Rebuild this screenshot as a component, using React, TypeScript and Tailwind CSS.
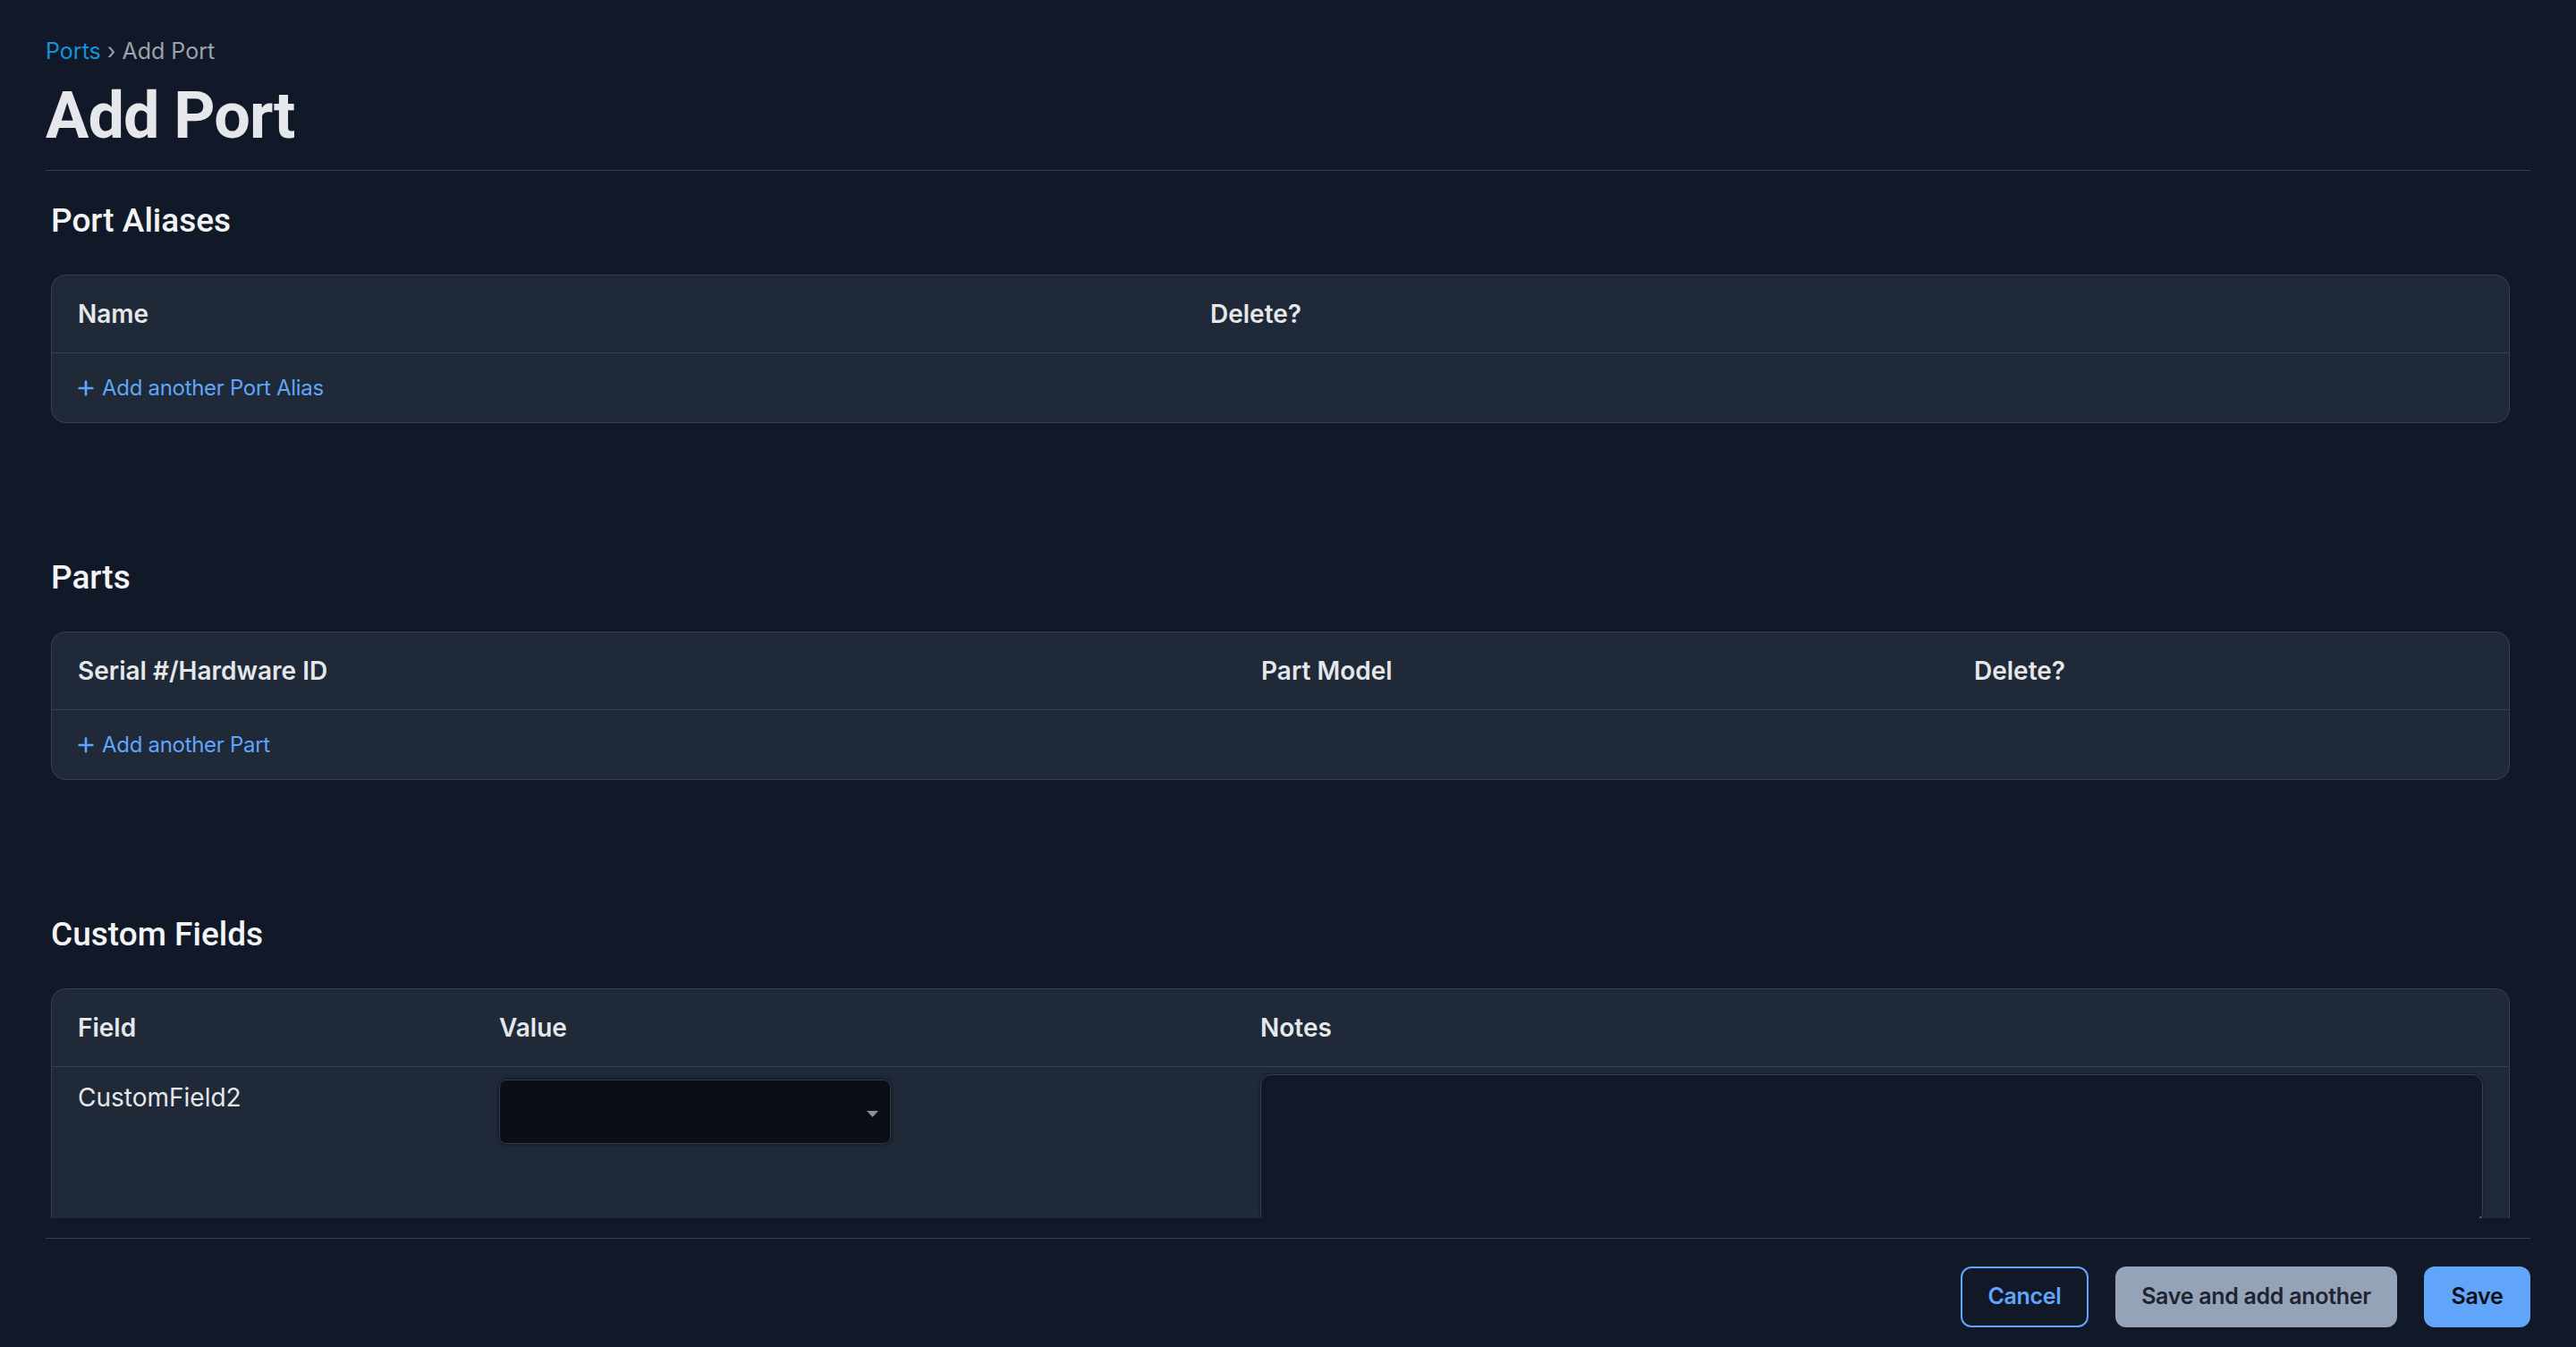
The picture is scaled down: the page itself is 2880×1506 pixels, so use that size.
import React from 'react';

const PlusIcon = () => (
    <svg width="18" height="18" viewBox="0 0 16 16" fill="none" stroke="currentColor" strokeWidth="2.4" strokeLinecap="round">
        <path d="M8 1.5v13M1.5 8h13" />
    </svg>
);

const Section: React.FC<{ title: string; first?: boolean; children: React.ReactNode }> = ({ title, first, children }) => (
    <section className={first ? 'pt-[37px]' : 'pt-[154px]'}>
        <h2 className="font-['Roboto',sans-serif] text-[37px] leading-[37px] font-medium text-[#f3f4f6]">{title}</h2>
        <div className="mt-[42px] rounded-[16px] border border-[#374151] bg-[#1f2937]">{children}</div>
    </section>
);

const AddLink: React.FC<{ label: string }> = ({ label }) => (
    <div className="h-[77px] flex items-center px-[29px]">
        <a className="flex items-center gap-[9px] text-[24px] tracking-[-0.3px] text-[#60a5fa] cursor-pointer">
            <PlusIcon />
            <span>{label}</span>
        </a>
    </div>
);

export default function App() {
    return (
        <div className="h-screen flex flex-col bg-[#111827] font-['Inter',sans-serif] text-[#e5e7eb]">
            <main className="flex-1 min-h-0 overflow-hidden px-[51px]">
                <div className="border-b border-[#374151] pt-[39px] pb-[24px]">
                    <nav className="h-[36px] text-[25px] leading-[36px]">
                        <a className="text-[#1493dc]">Ports</a>
                        <span className="text-[#9aa3ae]"> › Add Port</span>
                    </nav>
                    <h1 className="mt-[19px] font-['Roboto',sans-serif] text-[72px] leading-[72px] font-bold tracking-[-1px] text-[#e5e7eb]">
                        Add Port
                    </h1>
                </div>

                <div className="pl-[6px] pr-[23px]">
                    <Section title="Port Aliases" first>
                        <div className="grid grid-cols-[1265px_1fr] h-[87px] items-center border-b border-[#374151] text-[28px] font-semibold">
                            <div className="px-[29px]">Name</div>
                            <div className="px-[30px]">Delete?</div>
                        </div>
                        <AddLink label="Add another Port Alias" />
                    </Section>

                    <Section title="Parts">
                        <div className="grid grid-cols-[1322px_797px_1fr] h-[87px] items-center border-b border-[#374151] text-[28px] font-semibold">
                            <div className="px-[29px]">Serial #/Hardware ID</div>
                            <div className="px-[30px]">Part Model</div>
                            <div className="px-[30px]">Delete?</div>
                        </div>
                        <AddLink label="Add another Part" />
                    </Section>

                    <Section title="Custom Fields">
                        <div className="grid grid-cols-[470px_851px_1fr] h-[87px] items-center border-b border-[#374151] text-[28px] font-semibold">
                            <div className="px-[29px]">Field</div>
                            <div className="px-[30px]">Value</div>
                            <div className="px-[30px]">Notes</div>
                        </div>
                        <div className="grid grid-cols-[470px_851px_1fr] pb-[30px]">
                            <div className="px-[29px] pt-[14px] text-[28px] leading-[40px]">CustomField2</div>
                            <div className="px-[30px] pt-[14px]">
                                <div className="relative w-[438px] h-[72px] rounded-[8px] border border-[#343b48] bg-[#0b0e15] shadow-[0_0_4px_rgba(0,0,0,0.6)]">
                                    <svg className="absolute right-[13px] top-[34px]" width="13" height="7" viewBox="0 0 13 7">
                                        <polygon points="0,0 13,0 6.5,7" fill="#8d9199" />
                                    </svg>
                                </div>
                            </div>
                            <div className="pl-[30px] pr-[29px] pt-[8px]">
                                <textarea className="block w-full h-[167px] rounded-[12px] border border-[#374151] bg-[#111827] shadow-[0_0_3px_rgba(0,0,0,0.5)] outline-none" />
                            </div>
                        </div>
                    </Section>
                </div>
            </main>

            <footer className="mx-[51px] mt-[22px] border-t border-[#374151] pt-[31px] pb-[22px] flex justify-end gap-[30px] text-[25px] font-semibold tracking-[-0.3px]">
                <button className="w-[143px] h-[68px] rounded-[12px] border-2 border-[#60a5fa] text-[#60a5fa]">Cancel</button>
                <button className="w-[315px] h-[68px] rounded-[12px] bg-[#94a3b8] text-[#1f2430]">Save and add another</button>
                <button className="w-[119px] h-[68px] rounded-[12px] bg-[#60a5fa] text-[#0b0f17]">Save</button>
            </footer>
        </div>
    );
}
